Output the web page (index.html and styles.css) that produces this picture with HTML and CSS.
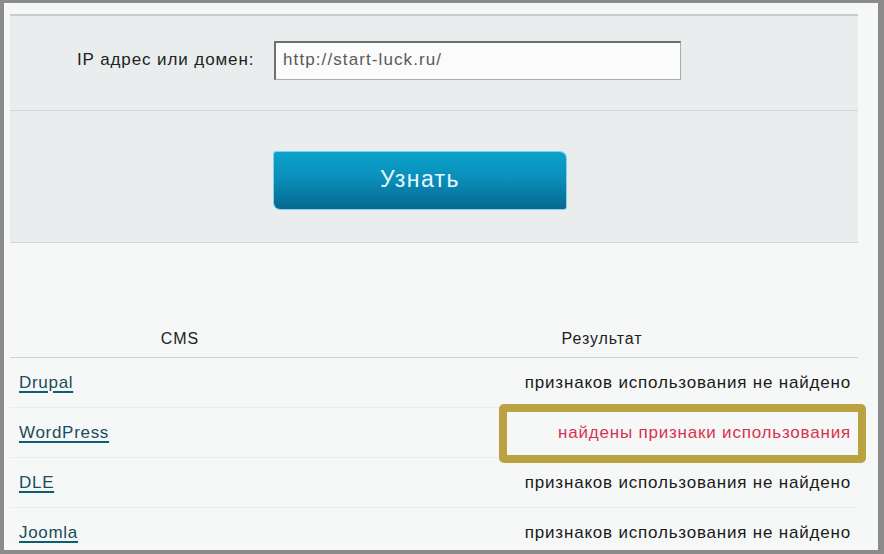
FILE: index.html
```html
<!DOCTYPE html>
<html lang="ru">
<head>
<meta charset="utf-8">
<link rel="stylesheet" href="styles.css">
</head>
<body>
<div class="frame">
  <div class="panel">
    <div class="form-row">
      <label class="label">IP адрес или домен:</label>
      <div class="input">http://start-luck.ru/</div>
    </div>
    <div class="button-row">
      <div class="button">Узнать</div>
    </div>
  </div>
  <div class="table">
    <div class="head">
      <div class="th th-cms">CMS</div>
      <div class="th th-res">Результат</div>
    </div>
    <div class="row">
      <a class="cms">Drupal</a>
      <span class="res">признаков использования не найдено</span>
    </div>
    <div class="row">
      <a class="cms">WordPress</a>
      <span class="res found">найдены признаки использования</span>
      <div class="highlight"></div>
    </div>
    <div class="row">
      <a class="cms">DLE</a>
      <span class="res">признаков использования не найдено</span>
    </div>
    <div class="row">
      <a class="cms">Joomla</a>
      <span class="res">признаков использования не найдено</span>
    </div>
  </div>
</div>
</body>
</html>
```
FILE: styles.css
```css
html, body {
  margin: 0;
  padding: 0;
}
body {
  background: #8b8b8b;
  width: 884px;
  height: 554px;
  overflow: hidden;
  font-family: "Liberation Sans", Arial, sans-serif;
  font-size: 17px;
  color: #1a1a1a;
}
.frame {
  margin: 3px 6px 0 4px;
  height: 547px;
  background: #f6f8f8;
  padding-top: 11px;
  box-sizing: border-box;
  overflow: hidden;
}
.panel {
  margin-left: 6px;
  width: 848px;
  background: #e9eded;
  border-top: 2px solid #c9cccc;
  border-bottom: 1px solid #d6d9d9;
}
.form-row {
  height: 95px;
  display: flex;
  align-items: center;
  padding-left: 67px;
  padding-bottom: 6px;
  border-bottom: 1px solid #d3d7d7;
  box-sizing: border-box;
}
.label {
  width: 197px;
  font-size: 17px;
  letter-spacing: 0.9px;
  color: #222;
}
.input {
  width: 407px;
  height: 39px;
  box-sizing: border-box;
  background: #fbfbfb;
  border: 1px solid #a9acac;
  border-top: 2px solid #6e7070;
  border-left: 2px solid #6e7070;
  padding-left: 7px;
  padding-bottom: 2px;
  display: flex;
  align-items: center;
  color: #5a5a5a;
  font-size: 17px;
  letter-spacing: 1.1px;
}
.button-row {
  height: 131px;
  padding-left: 264px;
  padding-top: 41px;
  box-sizing: border-box;
}
.button {
  width: 292px;
  height: 57px;
  box-sizing: border-box;
  border-radius: 2px 6px 2px 6px;
  background: linear-gradient(#0ba3cb, #0a8fbb 45%, #07688f);
  box-shadow: 0 0 0 1px #7fd3e8;
  color: #e6f8ff;
  font-size: 23px;
  letter-spacing: 1.4px;
  display: flex;
  align-items: center;
  justify-content: center;
  padding-bottom: 2px;
}
.table {
  margin-left: 6px;
  width: 848px;
}
.head {
  height: 115px;
  display: flex;
  align-items: flex-end;
  border-bottom: 1px solid #cfd2d2;
  padding-bottom: 9px;
  box-sizing: border-box;
}
.th {
  font-size: 16px;
  letter-spacing: 0.9px;
  color: #222;
  text-align: center;
}
.th-cms {
  width: 340px;
}
.th-res {
  width: 504px;
}
.row {
  position: relative;
  height: 50px;
  display: flex;
  align-items: center;
  justify-content: space-between;
  padding: 0 7px 0 9px;
  box-sizing: border-box;
  border-bottom: 1px solid #ebeded;
}
.cms {
  color: #1b4b5c;
  text-decoration: underline;
  text-decoration-color: #0b5f70;
  text-decoration-thickness: 2px;
  text-underline-offset: 3px;
  font-size: 17px;
  letter-spacing: 0.7px;
}
.res {
  font-size: 17px;
  letter-spacing: 0.8px;
  color: #1a1a1a;
}
.found {
  color: #d8324f;
}
.highlight {
  position: absolute;
  left: 489px;
  top: -4px;
  width: 367px;
  height: 59px;
  box-sizing: border-box;
  border: 8px solid #b9a23f;
  border-radius: 5px;
  pointer-events: none;
}
```
